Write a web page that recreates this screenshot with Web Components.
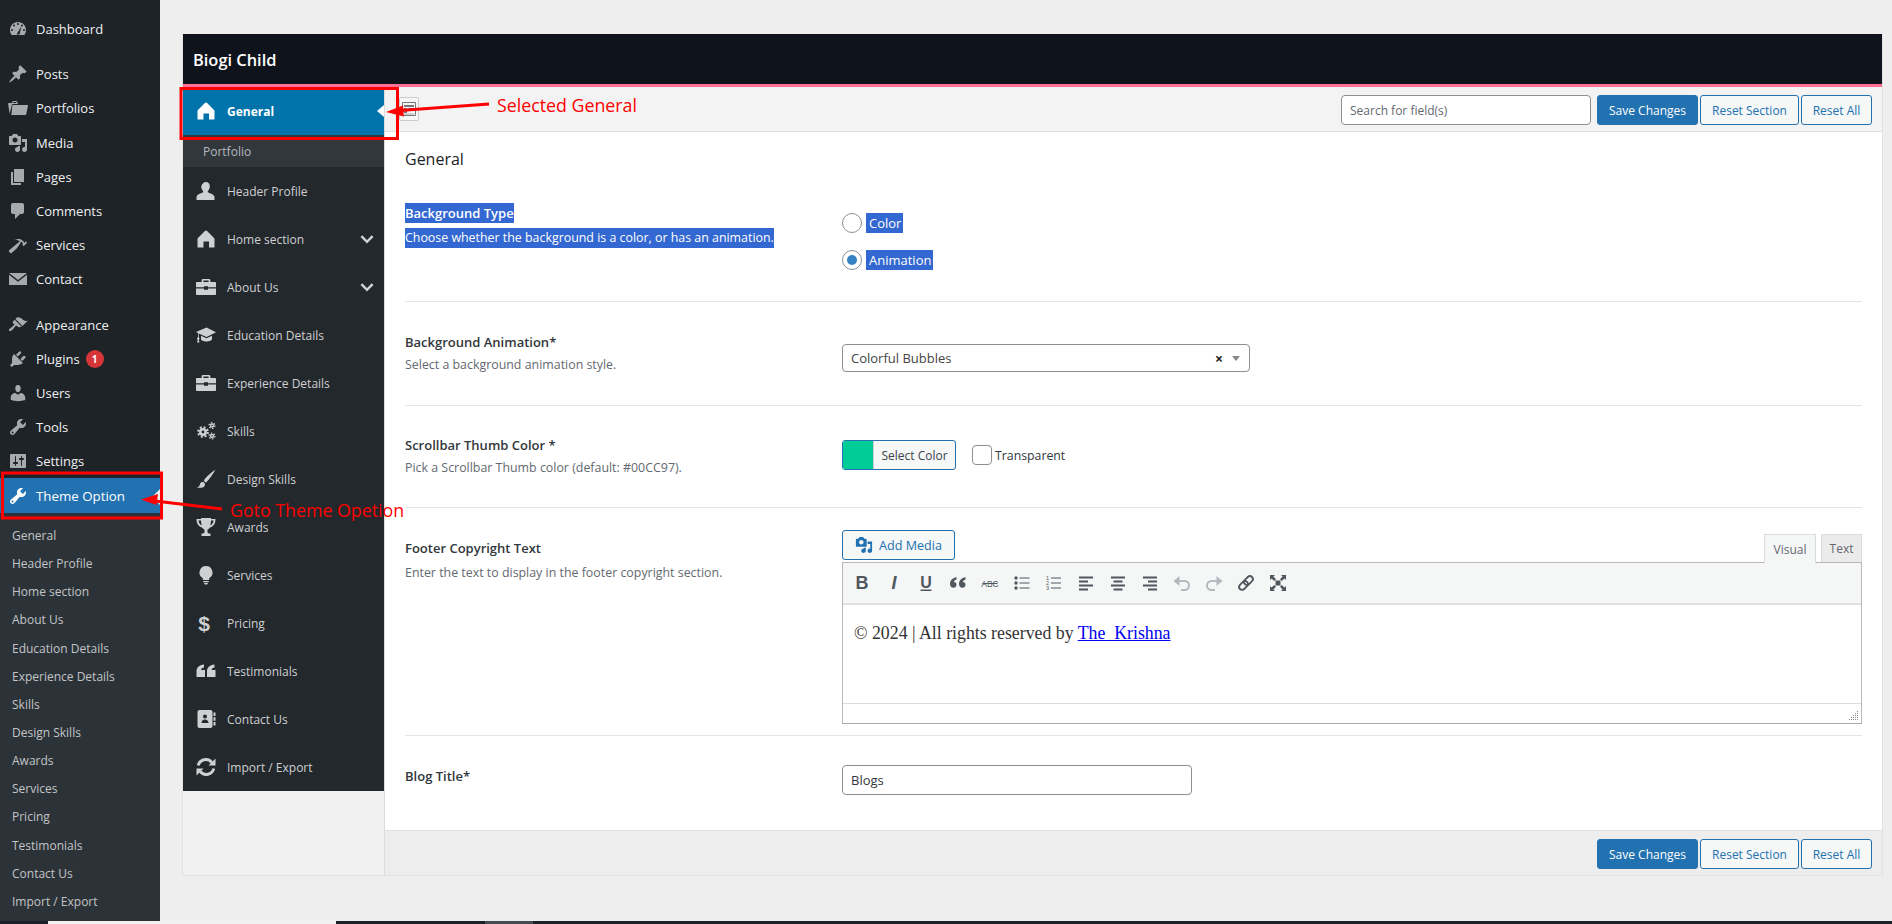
<!DOCTYPE html>
<html>
<head>
<meta charset="utf-8">
<title>Theme Option</title>
<style>
  html, body { margin: 0; height: 924px; overflow: hidden; background: #eeeeee; }
  body { font-family: 'Open Sans', 'Liberation Sans', sans-serif; font-size: 12px; color: #23282d; }
</style>
</head>
<body>
<app-shell>
  <admin-menu slot="menu">
    <menu-item icon="dashboard">Dashboard</menu-item>
    <menu-sep></menu-sep>
    <menu-item icon="pin">Posts</menu-item>
    <menu-item icon="folder">Portfolios</menu-item>
    <menu-item icon="media">Media</menu-item>
    <menu-item icon="page">Pages</menu-item>
    <menu-item icon="comment">Comments</menu-item>
    <menu-item icon="hammer">Services</menu-item>
    <menu-item icon="mail">Contact</menu-item>
    <menu-sep></menu-sep>
    <menu-item icon="brush">Appearance</menu-item>
    <menu-item icon="plugin">Plugins <menu-badge>1</menu-badge></menu-item>
    <menu-item icon="user">Users</menu-item>
    <menu-item icon="wrench">Tools</menu-item>
    <menu-item icon="sliders">Settings</menu-item>
    <menu-item icon="wrench" active>Theme Option</menu-item>
    <sub-menu>
      <span>General</span><span>Header Profile</span><span>Home section</span><span>About Us</span>
      <span>Education Details</span><span>Experience Details</span><span>Skills</span><span>Design Skills</span>
      <span>Awards</span><span>Services</span><span>Pricing</span><span>Testimonials</span>
      <span>Contact Us</span><span>Import / Export</span>
    </sub-menu>
  </admin-menu>

  <options-panel>
    <span slot="title">Biogi Child</span>

    <nav-item slot="nav" icon="home" active>General</nav-item>
    <nav-sub slot="nav">Portfolio</nav-sub>
    <nav-item slot="nav" icon="person">Header Profile</nav-item>
    <nav-item slot="nav" icon="home" more>Home section</nav-item>
    <nav-item slot="nav" icon="case" more>About Us</nav-item>
    <nav-item slot="nav" icon="cap">Education Details</nav-item>
    <nav-item slot="nav" icon="case">Experience Details</nav-item>
    <nav-item slot="nav" icon="gears">Skills</nav-item>
    <nav-item slot="nav" icon="paint">Design Skills</nav-item>
    <nav-item slot="nav" icon="trophy">Awards</nav-item>
    <nav-item slot="nav" icon="bulb">Services</nav-item>
    <nav-item slot="nav" icon="dollar">Pricing</nav-item>
    <nav-item slot="nav" icon="quote">Testimonials</nav-item>
    <nav-item slot="nav" icon="book">Contact Us</nav-item>
    <nav-item slot="nav" icon="refresh">Import / Export</nav-item>

    <action-bar slot="toolbar" search></action-bar>

    <section-title>General</section-title>

    <opt-field style="--h:122px;--lt:23px;--ct:33px;--dg:5px" selected label="Background Type" desc="Choose whether the background is a color, or has an animation." line>
      <radio-opt selected>Color</radio-opt>
      <radio-opt selected checked>Animation</radio-opt>
    </opt-field>

    <opt-field style="--h:104px;--lt:30px;--ct:42px;--dg:3px" label="Background Animation*" desc="Select a background animation style." line>
      <select-box>Colorful Bubbles</select-box>
    </opt-field>

    <opt-field style="--h:102px;--lt:29px;--ct:34px;--dg:3px" label="Scrollbar Thumb Color *" desc="Pick a Scrollbar Thumb color (default: #00CC97)." line>
      <color-pick></color-pick>
    </opt-field>

    <opt-field style="--h:228px;--lt:30px;--ct:22px;--dg:5px" label="Footer Copyright Text" desc="Enter the text to display in the footer copyright section." line>
      <rich-editor>© 2024 | All rights reserved by <a href="#" style="color:#0000ee">The_Krishna</a></rich-editor>
    </opt-field>

    <opt-field style="--h:94px;--lt:30px;--ct:29px" label="Blog Title*">
      <text-box>Blogs</text-box>
    </opt-field>

    <action-bar slot="footer"></action-bar>
  </options-panel>
  <task-strip slot="strip"></task-strip>
</app-shell>

<red-notes></red-notes>

<script>
const ICONS = {
  dashboard: '<path fill-rule="evenodd" d="M3.76 16h12.48C17.34 14.63 18 12.89 18 11c0-4.42-3.58-8-8-8s-8 3.58-8 8c0 1.89.66 3.63 1.76 5zM10 4a1 1 0 1 1 0 2 1 1 0 0 1 0-2zM6 5.5a1 1 0 1 1 0 2 1 1 0 0 1 0-2zM14 5.500a1 1 0 1 1 0 2 1 1 0 0 1 0-2zM4 10a1 1 0 1 1 0 2 1 1 0 0 1 0-2zM16 10a1 1 0 1 1 0 2 1 1 0 0 1 0-2zM8.500 15.500L13.500 7l-2 8.500z"/>',
  pin: '<path d="M10.44 3.02l1.82-1.82 6.36 6.35-1.83 1.82c-1.05-.68-2.48-.57-3.41.36l-.75.75c-.92.93-1.04 2.35-.35 3.41l-1.83 1.82-2.41-2.41-2.8 2.79c-.42.42-3.38 2.71-3.8 2.29s1.86-3.39 2.28-3.81l2.79-2.79L4.1 9.36l1.83-1.82c1.05.69 2.48.57 3.4-.36l.75-.75c.93-.92 1.05-2.35.36-3.41z"/>',
  folder: '<path d="M4 5H.78c-.37 0-.74.32-.69.84l1.56 9.99S3.5 8.47 3.86 6.7c.11-.53.61-.7.98-.7H10s-.7-2.08-.77-2.31C9.11 3.25 8.89 3 8.45 3H5.14c-.36 0-.7.23-.8.64C4.25 4.04 4 5 4 5zm1.2-1h3l.4 1H4.900zM4.900 7h14.500c.4 0 .65.3.6.7L18.200 16.300c-.1.4-.4.700-.8.700H2.600c.4 0 .8-.3.9-.7L4.300 7.500c.1-.3.3-.5.6-.5z"/>',
  media: '<path fill-rule="evenodd" d="M13 11V4c0-.55-.45-1-1-1h-1.670L9 1H5L3.670 3H2c-.55 0-1 .45-1 1v7c0 .55.45 1 1 1h10c.55 0 1-.45 1-1zM7 4.500c1.380 0 2.500 1.120 2.500 2.500S8.380 9.500 7 9.500 4.500 8.380 4.500 7 5.620 4.500 7 4.500zM14 6h5v10.500c0 1.380-1.120 2.500-2.500 2.500S14 17.880 14 16.500s1.120-2.500 2.500-2.500c.17 0 .34.02.5.05V9h-3V6zm-4 8.050V13h2v3.500c0 1.380-1.120 2.500-2.500 2.500S7 17.880 7 16.500 8.120 14 9.500 14c.17 0 .34.02.5.05z"/>',
  page: '<path d="M6 15V2h10v13H6zm-1 1h8v2H3V5h2v11z"/>',
  comment: '<path d="M5 2h9c1.100 0 2 .9 2 2v7c0 1.100-.9 2-2 2h-2l-5 5v-5H5c-1.100 0-2-.9-2-2V4c0-1.100.9-2 2-2z"/>',
  hammer: '<path d="M17.700 6.320l1.410 1.420-3.470 3.410-1.420-1.420.84-.82c-.32-.76-.81-1.570-1.510-2.310l-4.610 6.590-5.260 4.700c-.39.39-1.020.39-1.420 0l-1.200-1.210c-.39-.39-.39-1.020 0-1.410l10.970-9.040c-1.370-.86-3.210-1.460-5.670-1.480 2.700-.82 4.950-.93 6.580-.3 1.700.66 2.820 2.200 3.910 3.530z"/>',
  mail: '<path d="M2 4h16c.3 0 .5.1.7.3L10 11 1.300 4.300C1.500 4.100 1.700 4 2 4zM1 5.800V16h18V5.800L10 12.800z"/>',
  brush: '<path d="M14.480 11.060L7.410 3.990l1.500-1.500c.5-.56 2.300-.47 3.510.32 1.210.8 1.430 1.280 2.910 2.100 1.180.64 2.450 1.260 4.450.85zm-.71.710L6.700 4.700 4.930 6.470c-.39.39-.39 1.020 0 1.410l1.060 1.060c.39.39.39 1.030 0 1.420-.6.6-1.430 1.110-2.210 1.690-.35.26-.7.53-1.010.84C1.430 13.230.4 14.960 1.200 15.750c.79.8 2.520-.23 3.860-1.570.31-.31.58-.66.84-1.010.58-.78 1.090-1.610 1.690-2.210.39-.39 1.020-.39 1.410 0l1.060 1.060c.39.39 1.020.39 1.410 0z"/>',
  plugin: '<path d="M13.110 4.360L9.870 7.600 8 5.730l3.240-3.240c.35-.34 1.050-.2 1.560.32.52.51.66 1.210.31 1.550zm-8 1.770l.91-1.120 9.010 9.010-1.190.84c-.71.71-2.630 1.160-3.820 1.160H6.140L4.900 17.260c-.59.59-1.540.59-2.120 0-.59-.58-.59-1.530 0-2.120l1.240-1.240v-3.880c0-1.130.4-3.190 1.090-3.890zm7.260 3.970l3.240-3.240c.34-.35 1.040-.21 1.550.31.52.51.66 1.210.31 1.550l-3.240 3.250z"/>',
  user: '<path d="M10 9.250c-2.270 0-2.730-3.440-2.730-3.440C7 4.020 7.820 2 9.970 2c2.160 0 2.980 2.020 2.710 3.810 0 0-.41 3.440-2.680 3.440zm0 2.570L12.720 10c2.390 0 4.520 2.330 4.520 4.530v2.490s-3.650 1.130-7.240 1.130c-3.650 0-7.240-1.130-7.240-1.130v-2.490c0-2.250 1.940-4.480 4.470-4.480z"/>',
  wrench: '<path fill-rule="evenodd" d="M16.680 9.770c-1.340 1.340-3.300 1.670-4.950.99l-5.410 6.520c-.99.99-2.590.99-3.580 0s-.99-2.590 0-3.570l6.520-5.420c-.68-1.650-.35-3.610.99-4.950 1.280-1.280 3.120-1.620 4.720-1.060l-2.890 2.890 2.820 2.820 2.860-2.870c.53 1.580.18 3.390-1.080 4.650zM3.810 16.210c.4.39 1.040.39 1.430 0 .4-.4.4-1.040 0-1.430-.39-.4-1.030-.4-1.430 0-.39.39-.39 1.030 0 1.430z"/>',
  sliders: '<path fill-rule="evenodd" d="M18 16V4c0-.55-.45-1-1-1H3c-.55 0-1 .45-1 1v12c0 .55.45 1 1 1h14c.55 0 1-.45 1-1zM8 11h1c.55 0 1 .45 1 1s-.45 1-1 1H8v1.500c0 .28-.22.5-.5.5s-.5-.22-.5-.5V13H6c-.55 0-1-.45-1-1s.45-1 1-1h1V5.500c0-.28.22-.5.5-.5s.5.22.5.5V11zm5-2h-1c-.55 0-1-.45-1-1s.45-1 1-1h1V5.500c0-.28.22-.5.5-.5s.5.22.5.5V7h1c.55 0 1 .45 1 1s-.45 1-1 1h-1v5.500c0 .28-.22.5-.5.5s-.5-.22-.5-.5V9z"/>',
  home: '<path d="M10 1.500c.4 0 .8.2 1.100.5L18.500 9.500V18.500h-5.500V12.500H7.500V18.500H1.500V9.500L8.900 2c.3-.3.7-.5 1.100-.5z"/>',
  person: '<path d="M10 1c2.400 0 3.800 1.800 3.800 4.300 0 1.900-.8 3.600-1.800 4.600-.4.5-.4 1.300.2 1.700 1.700 1 5.800 1.500 6.300 4.400V19H.5v-3c.5-2.900 4.600-3.400 6.300-4.400.6-.4.6-1.200.2-1.700-1-1-1.800-2.700-1.800-4.600C6.200 2.800 7.600 1 10 1z"/>',
  case: '<path fill-rule="evenodd" d="M7 2h6c.8 0 1.400.6 1.400 1.400V5H19c.5 0 1 .4 1 1v4.200H12v-1H8v1H0V6c0-.6.5-1 1-1h4.600V3.400C5.600 2.600 6.200 2 7 2zm.4 1.600V5h5.200V3.600H7.400zM0 11.400h8v1.300h4v-1.300h8V17c0 .6-.5 1-1 1H1c-.5 0-1-.4-1-1z"/>',
  cap: '<path d="M10.500 2.500L0 7l2 .9v4.300c-.6.3-1 .8-1 1.300 0 .5.3 1 .8 1.200L1 17.500h2.500l-.7-2.800c.4-.3.7-.7.7-1.200 0-.6-.3-1-.8-1.300V8.400L10.500 12 20 7.300zM5 10.800V14c0 1.500 2.700 2.500 5.500 2.500S16 15.500 16 14v-3.200l-5.500 2.500z"/>',
  gears: '<g fill="none" stroke="currentColor"><circle cx="7" cy="11" r="2.700" stroke-width="2.600"/><circle cx="7" cy="11" r="4.900" stroke-width="1.900" stroke-dasharray="2 1.850"/><circle cx="16" cy="4.500" r="1.500" stroke-width="1.400"/><circle cx="16" cy="4.500" r="2.900" stroke-width="1.300" stroke-dasharray="1.400 1.640"/><circle cx="16" cy="15" r="1.500" stroke-width="1.400"/><circle cx="16" cy="15" r="2.900" stroke-width="1.300" stroke-dasharray="1.400 1.640"/></g>',
  paint: '<path d="M19.500 .5c-3 2-9 7-11 10-.5.8-.6 1.300-.3 1.700l1 1c.5.4 1 .2 1.600-.4C13.500 9.800 17.500 4.500 19.500 .5zM7.200 12.800c-2 0-3.200 1.400-3.400 3-.1 1-.9 1.800-2.800 2.700 3.500.8 6.200.2 7.400-1.200.9-1.100.7-2.300 0-3.200-.4-.5-.8-1.300-1.200-1.300z"/>',
  trophy: '<path fill-rule="evenodd" d="M5 1h10v1h4.500c0 4-1.500 7.400-5.500 8.400-.6 1-1.400 1.700-2.500 2v2.500c0 1 1 1.500 3 1.600V19H5.500v-2.500c2-.1 3-.6 3-1.600v-2.500c-1.100-.3-1.900-1-2.500-2C2 9.400.5 6 .5 2H5zM2.500 3.500c.2 2 1 3.900 3.200 5C5.300 7 5.100 5.200 5 3.500zm15 0H15c-.1 1.700-.3 3.500-.7 5 2.200-1.100 3-3 3.200-5z"/>',
  bulb: '<path d="M10 1a6.500 6.500 0 0 0-4 11.600c.7.6 1 1.400 1 2.400h6c0-1 .3-1.800 1-2.400A6.500 6.500 0 0 0 10 1zM7.300 16h5.400v1.200H7.300zM8 18h4l-.8 1.400H8.800z"/>',
  dollar: '<text x="8" y="17.500" font-size="21" font-weight="700" text-anchor="middle" font-family="Liberation Sans" fill="currentColor">$</text>',
  quote: '<path d="M.5 10.500C.5 6.500 3 4 8 3.500v3c-1.500.3-2.700 1.200-3 2.500h4v7H.5zM11 10.500C11 6.500 13.500 4 18.500 3.500v3c-1.500.3-2.700 1.200-3 2.500h4v7H11z"/>',
  book: '<path fill-rule="evenodd" d="M3.500 1h11c1.100 0 2 .9 2 2v14c0 1.100-.9 2-2 2h-11c-1.100 0-2-.9-2-2V3c0-1.100.9-2 2-2zM9 5.500a2 2 0 1 0 0 4 2 2 0 0 0 0-4zM5.500 14h7c0-2-1.500-3.500-3.500-3.500S5.500 12 5.500 14z"/><path d="M17.500 3.500h2v3.500h-2zM17.500 8.300h2v3.500h-2zM17.500 13h2v3.500h-2z"/>',
  refresh: '<g fill="none" stroke="currentColor" stroke-width="3"><path d="M2.200 8.500A7.800 7.800 0 0 1 15.800 5.500"/><path d="M17.800 11.500A7.800 7.800 0 0 1 4.200 14.500"/></g><path d="M19.500 1.500v7h-7zM.5 18.500v-7h7z"/>',
  chevron: '<path fill="none" stroke="currentColor" stroke-width="3.200" d="M3 6.500l7 7 7-7"/>'
}

const svg = (name, size = 20) => `<svg width="${size}" height="${size}" viewBox="0 0 20 20" fill="currentColor" aria-hidden="true">${ICONS[name] || ''}</svg>`

class AppShell extends HTMLElement {
  constructor() {
    super()
    this.attachShadow({ mode: 'open' }).innerHTML = `
<style>
  :host { display: grid; grid-template-columns: 160px 1fr; grid-template-rows: 921px 3px; height: 924px; }
  .main { padding: 34px 9px 0 22px; min-width: 0; }
  ::slotted([slot=strip]) { grid-column: 1 / 3; }
</style>
<slot name="menu"></slot>
<div class="main"><slot></slot></div>
<slot name="strip"></slot>`
  }
}

class AdminMenu extends HTMLElement {
  constructor() {
    super()
    this.attachShadow({ mode: 'open' }).innerHTML = `
<style>
  :host { display: block; background: #1d2327; padding-top: 12px; height: 909px; font-size: 13px; }
</style>
<slot></slot>`
  }
}

class MenuSep extends HTMLElement {
  constructor() {
    super()
    this.attachShadow({ mode: 'open' }).innerHTML = '<style>:host { display: block; height: 11px; }</style>'
  }
}

class MenuItem extends HTMLElement {
  constructor() {
    super()
    this.attachShadow({ mode: 'open' }).innerHTML = `
<style>
  :host { display: flex; align-items: center; height: 34.2px; color: #f0f0f1; position: relative; }
  :host([active]) { background: #2271b1; color: #fff; height: 35px; font-size: 13.3px; }
  :host([active])::after {
    content: ''; position: absolute; right: 0; top: 11px;
    border: 8px solid transparent; border-right-color: #f0f0f1; border-left-width: 0;
  }
  .ic { width: 36px; display: flex; justify-content: center; color: #a7aaad; }
  :host([active]) .ic { color: #fff; }
  .tx { display: flex; align-items: center; gap: 6px; }
</style>
<span class="ic">${svg(this.getAttribute('icon'))}</span>
<span class="tx"><slot></slot></span>`
  }
}

class MenuBadge extends HTMLElement {
  constructor() {
    super()
    this.attachShadow({ mode: 'open' }).innerHTML = `
<style>
  :host {
    display: inline-flex; width: 18px; height: 18px; border-radius: 50%; background: #d63638; color: #fff;
    font-size: 10px; font-weight: 700; align-items: center; justify-content: center; vertical-align: middle;
  }
</style>
<slot></slot>`
  }
}

class SubMenu extends HTMLElement {
  constructor() {
    super()
    this.attachShadow({ mode: 'open' }).innerHTML = `
<style>
  :host { display: grid; grid-auto-rows: 28.15px; padding: 8px 0 6px 12px; background: #2c3338; color: #c3c4c7; font-size: 12px; align-items: center; }
</style>
<slot></slot>`
  }
}

class OptionsPanel extends HTMLElement {
  constructor() {
    super()
    this.attachShadow({ mode: 'open' }).innerHTML = `
<style>
  :host { display: block; height: 841px; border: 1px solid #e2e2e2; border-top: 0; background: #f1f1f1; }
  .head {
    height: 50px; box-sizing: border-box; padding-left: 10px; display: flex; align-items: center;
    background: #0f141c; color: #fff; font-size: 16.4px; font-weight: 600;
  }
  .stripe { height: 3px; background: #ff7096; }
  .body { display: grid; grid-template-columns: 202px 1fr; height: 788px; }
  .nav { border-right: 1px solid #dcdcdc; }
  .content { background: #fff; display: flex; flex-direction: column; min-width: 0; }
  .fields { flex: 1; padding: 0 20px; }
</style>
<div class="head"><slot name="title"></slot></div>
<div class="stripe"></div>
<div class="body">
  <div class="nav"><slot name="nav"></slot></div>
  <div class="content">
    <slot name="toolbar"></slot>
    <div class="fields"><slot></slot></div>
    <slot name="footer"></slot>
  </div>
</div>`
  }
}

class NavItem extends HTMLElement {
  constructor() {
    super()
    const more = this.hasAttribute('more') ? `<span class="more">${svg('chevron', 16)}</span>` : ''
    this.attachShadow({ mode: 'open' }).innerHTML = `
<style>
  :host { display: flex; align-items: center; height: 48px; background: #23282d; color: #cfd0d1; position: relative; padding-left: 13px; }
  :host([active]) { background: #0073aa; color: #fff; font-weight: 700; }
  :host([active])::after {
    content: ''; position: absolute; right: 0; top: 18px;
    border: 6.5px solid transparent; border-right: 7px solid #fff; border-left-width: 0;
  }
  .ic { width: 20px; height: 20px; margin-right: 11px; }
  .more { position: absolute; right: 9px; top: 16px; height: 16px; }
</style>
<span class="ic">${svg(this.getAttribute('icon'))}</span>
<slot></slot>${more}`
  }
}

class NavSub extends HTMLElement {
  constructor() {
    super()
    this.attachShadow({ mode: 'open' }).innerHTML = `
<style>
  :host { display: flex; align-items: center; height: 32px; padding-left: 20px; background: #32373c; color: #b4b9be; }
</style>
<slot></slot>`
  }
}

class WpBtn extends HTMLElement {
  constructor() {
    super()
    this.attachShadow({ mode: 'open' }).innerHTML = `
<style>
  :host {
    display: inline-flex; align-items: center; justify-content: center; box-sizing: border-box; height: 30px;
    border: 1px solid #2271b1; border-radius: 3px; background: #f6f7f7; color: #2271b1; white-space: nowrap;
  }
  :host([primary]) { background: #2271b1; color: #fff; }
</style>
<slot></slot>`
  }
}

class ActionBar extends HTMLElement {
  constructor() {
    super()
    const search = this.hasAttribute('search')
    this.attachShadow({ mode: 'open' }).innerHTML = `
<style>
  :host {
    display: flex; justify-content: flex-end; align-items: center; height: 45px; box-sizing: border-box;
    padding: 2px 10px 0 14px; gap: 2px; background: #f3f3f3; border-bottom: 1px solid #dedede; position: relative;
  }
  :host([slot=footer]) { background: #ededed; border-bottom: 0; border-top: 1px solid #e1e1e1; padding-top: 2px; }
  .expand { margin-right: auto; width: 20px; height: 24px; box-sizing: border-box; border: 1px solid #ccc; border-radius: 2px; background: #f6f6f6; display: flex; align-items: center; justify-content: center; margin-top: -2px; }
  .search {
    width: 250px; height: 30px; box-sizing: border-box; margin-right: 4px; padding: 1px 7px 0 8px; border: 1px solid #8c8f94; border-radius: 4px;
    background: #fff; color: #646970; display: flex; align-items: center;
  }
  wp-btn { padding-top: 1px; }
  .save { width: 101px; }
  .sect { width: 99px; }
  .all { width: 71px; }
</style>
${search ? `<span class="expand"><svg width="14" height="14" viewBox="0 0 14 14"><path fill="none" stroke="#777" d="M.5.5h13v13H.5z"/><path fill="#777" d="M2 3h10v2H2zM2 6h3v5H2zM6 6h6v2H6z"/><path fill="#aaa" d="M2 11.500h10v1H2z"/></svg></span><span class="search">Search for field(s)</span>` : ''}
<wp-btn class="save" primary>Save Changes</wp-btn>
<wp-btn class="sect">Reset Section</wp-btn>
<wp-btn class="all">Reset All</wp-btn>`
  }
}

class SectionTitle extends HTMLElement {
  constructor() {
    super()
    this.attachShadow({ mode: 'open' }).innerHTML = `
<style>
  :host { display: flex; align-items: center; height: 48px; padding-top: 6px; box-sizing: border-box; font-size: 16px; font-weight: 500; color: #1d2327; }
</style>
<slot></slot>`
  }
}

class OptField extends HTMLElement {
  constructor() {
    super()
    this.attachShadow({ mode: 'open' }).innerHTML = `
<style>
  :host {
    display: grid; grid-template-columns: 437px 1fr; box-sizing: border-box; height: var(--h);
  }
  :host([line]) { border-bottom: 1px solid #e5e5e5; }
  .l { padding-top: var(--lt); }
  .c { padding-top: var(--ct); min-width: 0; }
  .lab { height: 20px; line-height: 20px; font-size: 13px; font-weight: 600; color: #32373c; }
  .des { margin-top: var(--dg, 4px); height: 20px; line-height: 20px; color: #646970; font-size: 12.4px; }
  :host([selected]) .lab span, :host([selected]) .des span { background: #3367d1; color: #fff; display: inline-block; }
</style>
<div class="l">
  <div class="lab"><span>${this.getAttribute('label')}</span></div>
  ${this.hasAttribute('desc') ? `<div class="des"><span>${this.getAttribute('desc')}</span></div>` : ''}
</div>
<div class="c"><slot></slot></div>`
  }
}

class RadioOpt extends HTMLElement {
  constructor() {
    super()
    this.attachShadow({ mode: 'open' }).innerHTML = `
<style>
  :host { display: flex; align-items: center; gap: 4px; height: 20px; margin-bottom: 17px; color: #32373c; font-size: 13px; }
  .r { width: 20px; height: 20px; box-sizing: border-box; border: 1px solid #8c8f94; border-radius: 50%; background: #fff; display: flex; align-items: center; justify-content: center; }
  :host([checked]) .r::before { content: ''; width: 10px; height: 10px; border-radius: 50%; background: #3582c4; }
  :host([selected]) .t { background: #3367d1; color: #fff; padding: 0 2px 0 3px; line-height: 20px; }
</style>
<span class="r"></span><span class="t"><slot></slot></span>`
  }
}

class SelectBox extends HTMLElement {
  constructor() {
    super()
    this.attachShadow({ mode: 'open' }).innerHTML = `
<style>
  :host {
    display: flex; align-items: center; width: 408px; height: 28px; box-sizing: border-box; padding: 0 9px 0 8px;
    border: 1px solid #8c8f94; border-radius: 4px; background: #fff; color: #444; font-size: 13px;
  }
  .x { margin-left: auto; color: #222; font-size: 14px; font-weight: 700; margin-right: 9px; }
  .a { border: 4px solid transparent; border-top: 5px solid #888; border-bottom: 0; }
</style>
<span><slot></slot></span><span class="x">×</span><span class="a"></span>`
  }
}

class ColorPick extends HTMLElement {
  constructor() {
    super()
    this.attachShadow({ mode: 'open' }).innerHTML = `
<style>
  :host { display: flex; align-items: center; height: 30px; color: #32373c; }
  .btn { width: 114px; height: 30px; box-sizing: border-box; border: 1px solid #2271b1; border-radius: 3px; display: flex; overflow: hidden; background: #f6f7f7; }
  .sw { width: 30px; background: #00cc97; border-right: 1px solid #ccc; }
  .lb { flex: 1; display: flex; align-items: center; justify-content: center; color: #3c434a; }
  .cb { width: 20px; height: 20px; box-sizing: border-box; margin-left: 16px; margin-right: 3px; border: 1px solid #8c8f94; border-radius: 4px; background: #fff; }
  .tr { font-size: 12.3px; }
</style>
<span class="btn"><span class="sw"></span><span class="lb">Select Color</span></span>
<span class="cb"></span><span class="tr">Transparent</span>`
  }
}

class TextBox extends HTMLElement {
  constructor() {
    super()
    this.attachShadow({ mode: 'open' }).innerHTML = `
<style>
  :host {
    display: flex; align-items: center; width: 350px; height: 30px; box-sizing: border-box; padding: 0 8px;
    border: 1px solid #8c8f94; border-radius: 4px; background: #fff; color: #32373c; font-size: 13px;
  }
</style>
<slot></slot>`
  }
}

const EDITOR_ICONS = [
  '<text x="10" y="16" font-size="18" font-weight="700" text-anchor="middle" font-family="Liberation Sans" fill="currentColor">B</text>',
  '<text x="10" y="16" font-size="18" font-weight="700" font-style="italic" text-anchor="middle" font-family="Liberation Sans" fill="currentColor">I</text>',
  '<text x="10" y="14.500" font-size="16" font-weight="700" text-anchor="middle" font-family="Liberation Sans" fill="currentColor">U</text><path d="M4.500 16.500h11v1.500h-11z"/>',
  '<path d="M2 11C2 7.500 4.500 5 8.500 4v2.500c-1.500.5-2.500 1.300-2.700 2.500 1.700 0 2.700 1 2.700 2.700 0 1.700-1.300 3-3 3C3.300 14.700 2 13.200 2 11zM11 11c0-3.500 2.500-6 6.500-7v2.500c-1.500.5-2.500 1.300-2.700 2.500 1.700 0 2.700 1 2.700 2.700 0 1.700-1.300 3-3 3-2.200 0-3.500-1.500-3.500-3.700z"/>',
  '<text x="10" y="13.500" font-size="8.500" text-anchor="middle" font-family="Liberation Sans" fill="currentColor">ABC</text><path d="M2.500 10h15v1h-15z"/>',
  '<circle cx="4" cy="5" r="1.700"/><circle cx="4" cy="10" r="1.700"/><circle cx="4" cy="15" r="1.700"/><path d="M7.500 4.500h10v1h-10zM7.500 9.500h10v1h-10zM7.500 14.500h10v1h-10z"/>',
  '<g font-size="5.500" font-family="Liberation Sans" fill="currentColor"><text x="2" y="6.500">1</text><text x="2" y="11.500">2</text><text x="2" y="16.500">3</text></g><path d="M7 4.500h10v1H7zM7 9.500h10v1H7zM7 14.500h10v1H7z"/>',
  '<path d="M3 3.500h14v2H3zM3 7.500h9v2H3zM3 11.500h14v2H3zM3 15.500h9v2H3z"/>',
  '<path d="M3 3.500h14v2H3zM5.500 7.500h9v2h-9zM3 11.500h14v2H3zM5.500 15.500h9v2h-9z"/>',
  '<path d="M3 3.500h14v2H3zM8 7.500h9v2H8zM3 11.500h14v2H3zM8 15.500h9v2H8z"/>',
  '<path fill="none" stroke="currentColor" stroke-width="2" d="M5 8h7.500a4.500 4.500 0 0 1 0 9H9"/><path d="M7.500 3v10L1.500 8z"/>',
  '<path fill="none" stroke="currentColor" stroke-width="2" d="M15 8H7.500a4.500 4.500 0 0 0 0 9H11"/><path d="M12.500 3v10l6-5z"/>',
  '<g fill="none" stroke="currentColor" stroke-width="1.800" transform="rotate(-45 10 10)"><rect x="1.500" y="7" width="10" height="6" rx="3"/><rect x="8.500" y="7" width="10" height="6" rx="3"/></g>',
  '<path d="M2 2h5L5.400 3.600 8 6.200 6.200 8 3.600 5.400 2 7zM18 2v5l-1.600-1.600L13.800 8 12 6.200l2.600-2.600L13 2zM2 18v-5l1.600 1.600L6.200 12 8 13.800l-2.600 2.600L7 18zM18 18h-5l1.600-1.600L12 13.800 13.800 12l2.600 2.600L18 13z"/><path d="M7.500 7.500h5v5h-5z"/>'
]

class RichEditor extends HTMLElement {
  constructor() {
    super()
    const buttons = EDITOR_ICONS.map((p, i) => `<span class="b${i === 10 || i === 11 ? ' off' : ''}"><svg width="20" height="20" viewBox="0 0 20 20" fill="currentColor">${p}</svg></span>`).join('')
    this.attachShadow({ mode: 'open' }).innerHTML = `
<style>
  :host { display: block; }
  .top { display: flex; align-items: flex-end; height: 32px; }
  .top wp-btn { width: 113px; align-self: flex-start; gap: 6px; font-size: 12.6px; }
  .top wp-btn svg { color: #2271b1; }
  .tab {
    height: 28px; box-sizing: border-box; border: 1px solid #dcdcde; border-bottom: 0; display: flex; align-items: center; justify-content: center;
    color: #646970; background: #ebebeb; position: relative;
  }
  .tab.v { margin-left: auto; margin-right: 5px; width: 52px; height: 29px; margin-bottom: -1px; background: #f5f6f6; z-index: 1; }
  .tab.t { width: 41px; }
  .box { border: 1px solid #b8b8b8; border-bottom-color: #aaa; height: 162px; display: flex; flex-direction: column; box-sizing: border-box; }
  .bar { height: 40px; background: #f5f6f6; border-bottom: 2px solid #dfdfdf; display: flex; align-items: center; padding-left: 3px; color: #50575e; flex: none; }
  .b { width: 32px; display: flex; justify-content: center; }
  .off { color: #b4b9be; }
  .txt { flex: 1; padding: 18px 10px 0 11px; font: 17.8px/20px 'Liberation Serif', serif; color: #333; }
  .status { height: 19px; border-top: 1px solid #dcdcde; flex: none; position: relative; }
  .grip { position: absolute; right: 2px; bottom: 2px; }
</style>
<div class="top">
  <wp-btn>${svg('media', 18)}<span>Add Media</span></wp-btn>
  <span class="tab v">Visual</span><span class="tab t">Text</span>
</div>
<div class="box">
  <div class="bar">${buttons}</div>
  <div class="txt"><slot></slot></div>
  <div class="status"><svg class="grip" width="10" height="10" viewBox="0 0 10 10" fill="#888"><path d="M8 0h1v1H8zM6 2h1v1H6zM8 2h1v1H8zM4 4h1v1H4zM6 4h1v1H6zM8 4h1v1H8zM2 6h1v1H2zM4 6h1v1H4zM6 6h1v1H6zM8 6h1v1H8zM0 8h1v1H0zM2 8h1v1H2zM4 8h1v1H4zM6 8h1v1H6zM8 8h1v1H8z"/></svg></div>
</div>`
  }
}

class TaskStrip extends HTMLElement {
  constructor() {
    super()
    this.attachShadow({ mode: 'open' }).innerHTML = `
<style>
  :host { display: flex; background: #1a2129; height: 3px; }
  .w { margin-left: 48px; width: 288px; background: #f1f1f1; }
  .g { margin-left: 149px; width: 48px; background: #444b52; }
</style>
<span class="w"></span><span class="g"></span>`
  }
}

class RedNotes extends HTMLElement {
  constructor() {
    super()
    this.attachShadow({ mode: 'open' }).innerHTML = `
<style>
  :host { position: absolute; left: 0; top: 0; width: 1892px; height: 924px; pointer-events: none; color: #f00; font-size: 17.8px; }
  svg { position: absolute; left: 0; top: 0; }
  span { position: absolute; white-space: nowrap; line-height: 22px; }
  .a { left: 497px; top: 94px; }
  .b { left: 230px; top: 499px; }
</style>
<svg width="1892" height="924" fill="none" stroke="#f00" stroke-width="3">
  <rect x="181" y="88.500" width="216.500" height="50" />
  <rect x="2.500" y="473" width="159" height="45" />
  <path d="M489 104L400 110.500" stroke-width="3"/>
  <path d="M386 112l17-6.500.8 11z" fill="#f00" stroke="none"/>
  <path d="M222 509L155 501" stroke-width="3"/>
  <path d="M141 499.500l17-5.500-1.500 11z" fill="#f00" stroke="none"/>
</svg>
<span class="a">Selected General</span>
<span class="b">Goto Theme Opetion</span>`
  }
}

customElements.define('wp-btn', WpBtn)
customElements.define('app-shell', AppShell)
customElements.define('admin-menu', AdminMenu)
customElements.define('menu-sep', MenuSep)
customElements.define('menu-item', MenuItem)
customElements.define('menu-badge', MenuBadge)
customElements.define('sub-menu', SubMenu)
customElements.define('options-panel', OptionsPanel)
customElements.define('nav-item', NavItem)
customElements.define('nav-sub', NavSub)
customElements.define('action-bar', ActionBar)
customElements.define('section-title', SectionTitle)
customElements.define('opt-field', OptField)
customElements.define('radio-opt', RadioOpt)
customElements.define('select-box', SelectBox)
customElements.define('color-pick', ColorPick)
customElements.define('text-box', TextBox)
customElements.define('rich-editor', RichEditor)
customElements.define('task-strip', TaskStrip)
customElements.define('red-notes', RedNotes)
</script>
</body>
</html>
